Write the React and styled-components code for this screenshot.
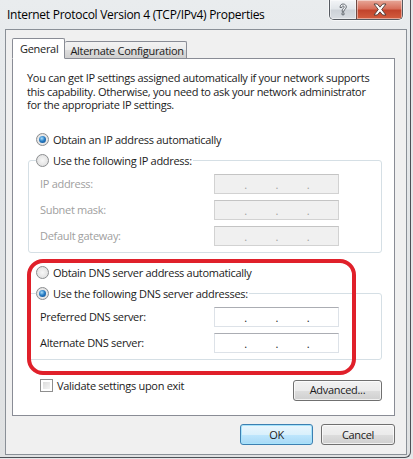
import React from 'react';
import styled, { createGlobalStyle } from 'styled-components';

const GlobalStyle = createGlobalStyle`
    html, body {
        margin: 0;
        padding: 0;
        background: #e4e6e8;
    }
    body {
        font-family: "Segoe UI", "Open Sans", "Noto Sans", sans-serif;
        font-size: 11px;
        letter-spacing: -0.3px;
        color: #1b1b1b;
    }
    * {
        box-sizing: border-box;
    }
`;

const Window = styled.div`
    width: 411px;
    height: 458px;
    display: flex;
    flex-direction: column;
    background: linear-gradient(180deg, #e9ecee 0%, #e3e6e8 40%, #dfe1e2 100%);
    border-right: 1px solid #4d5156;
    border-bottom: 1px solid #4d5156;
    border-bottom-right-radius: 6px;
`;

const TitleBar = styled.div`
    height: 29px;
    display: flex;
    align-items: flex-start;
    padding-left: 7px;
    padding-right: 7px;
`;

const TitleText = styled.div`
    flex: 1;
    margin-top: 7px;
    font-size: 12px;
    letter-spacing: -0.27px;
    line-height: 16px;
    color: #000;
`;

const CaptionGroup = styled.div`
    display: flex;
    height: 20px;
    border: 1px solid #555a61;
    border-top: none;
    border-radius: 0 0 5px 5px;
    overflow: hidden;
    box-shadow: 0 0 0 1px rgba(255, 255, 255, 0.6);
`;

const CaptionButton = styled.div`
    width: ${({ wide }) => (wide ? 46 : 26)}px;
    display: flex;
    align-items: center;
    justify-content: center;
    background: ${({ close }) => (close
        ? 'linear-gradient(180deg, #e7a899 0%, #d8705c 45%, #c2442c 55%, #d35e3f 100%)'
        : 'linear-gradient(180deg, #f3f5f7 0%, #e2e6ea 45%, #cdd2d8 55%, #d9dde2 100%)')};
    border-left: ${({ close }) => (close ? '1px solid #6d4b45' : 'none')};
    box-shadow: inset 0 0 0 1px rgba(255, 255, 255, 0.45);
`;

const Client = styled.div`
    flex: 1;
    margin: 0 3px 2px 5px;
    background: #f0f0f0;
    border: 1px solid #8a9097;
    padding: 7px 11px 0 6px;
    display: flex;
    flex-direction: column;
`;

const TabStrip = styled.div`
    display: flex;
    align-items: flex-end;
    height: 21px;
    position: relative;
    z-index: 1;
`;

const Tab = styled.div`
    height: ${({ active }) => (active ? 21 : 17)}px;
    padding: ${({ active }) => (active ? '0 6px 0 7px' : '0 2px 0 5px')};
    display: flex;
    align-items: center;
    border: 1px solid #898c95;
    border-bottom: ${({ active }) => (active ? '1px solid #fff' : 'none')};
    border-left: ${({ first }) => (first ? '1px solid #898c95' : 'none')};
    background: ${({ active }) => (active
        ? '#fff'
        : 'linear-gradient(180deg, #f2f2f2 0%, #ebebeb 50%, #dddddd 51%, #cfcfcf 100%)')};
    border-radius: 2px 2px 0 0;
    line-height: 14px;
    padding-top: ${({ active }) => (active ? 0 : 1)}px;
    margin-bottom: ${({ active }) => (active ? -1 : 0)}px;
`;

const Panel = styled.div`
    position: relative;
    height: 358px;
    background: #fff;
    border: 1px solid #898c95;
    display: flex;
    flex-direction: column;
`;

const Description = styled.p`
    margin: 12px 12px 0 14px;
    line-height: 13.5px;
`;

const RadioRow = styled.label`
    display: flex;
    align-items: center;
    height: 16px;
    gap: 4px;
    margin-top: ${({ top }) => top}px;
    margin-left: ${({ indent }) => indent ?? 23}px;
`;

const RadioCircle = styled.span`
    width: 13px;
    height: 13px;
    border-radius: 50%;
    border: 1px solid #8b8d8f;
    background: radial-gradient(circle at 50% 50%, #f7f7f7 0%, #e3e3e3 70%, #d4d4d4 100%);
    display: flex;
    align-items: center;
    justify-content: center;
    flex-shrink: 0;
`;

const RadioDot = styled.span`
    width: 7px;
    height: 7px;
    border-radius: 50%;
    background: radial-gradient(circle at 40% 35%, #a9defa 0%, #2a7fc6 45%, #0b4585 100%);
`;

const Group = styled.fieldset`
    margin: 5px 12px 0 15px;
    padding: 0 0 6px 0;
    border: 1px solid #d5dfe5;
    border-radius: 3px;
    min-width: 0;
`;

const Legend = styled.legend`
    margin-left: 7px;
    padding: 0 1px 0 0;
    line-height: 16px;
`;

const FieldRows = styled.div`
    display: flex;
    flex-direction: column;
    gap: 6px;
    margin-top: 5px;
    padding-left: 11px;
`;

const FieldRow = styled.div`
    display: flex;
    align-items: center;
    height: 20px;
`;

const FieldLabel = styled.span`
    width: 174px;
    color: ${({ disabled }) => (disabled ? '#a0a0a0' : '#1b1b1b')};
`;

const IpBox = styled.div`
    width: 125px;
    height: 20px;
    display: flex;
    align-items: center;
    background: ${({ disabled }) => (disabled ? '#f0f0f0' : '#fff')};
    border: 1px solid ${({ disabled }) => (disabled ? '#d2d2d2' : '#dde2e8')};
    border-top-color: ${({ disabled }) => (disabled ? '#c4c4c4' : '#abadb3')};
`;

const IpSegment = styled.span`
    flex: 1;
`;

const IpDot = styled.span`
    width: 2px;
    text-align: center;
    line-height: 14px;
    margin-top: 3px;
    color: ${({ disabled }) => (disabled ? '#a0a0a0' : '#1b1b1b')};
`;

const FooterRow = styled.div`
    display: flex;
    justify-content: space-between;
    align-items: flex-start;
    margin: 19px 12px 0 27px;
`;

const CheckRow = styled.label`
    display: flex;
    align-items: center;
    gap: 4px;
    height: 13px;
`;

const CheckBox = styled.span`
    width: 13px;
    height: 13px;
    border: 1px solid #8f8f8f;
    background: #fff;
    padding: 2px;
    display: flex;

    &::after {
        content: '';
        flex: 1;
        background: linear-gradient(135deg, #dcdcdc 0%, #f4f4f4 100%);
    }
`;

const Button = styled.button`
    font: inherit;
    letter-spacing: inherit;
    color: #1b1b1b;
    width: ${({ w }) => w}px;
    height: ${({ h }) => h ?? 21}px;
    margin-top: ${({ mt }) => mt ?? 0}px;
    border: 1px solid ${({ primary }) => (primary ? '#3c7fb1' : '#707070')};
    border-radius: 3px;
    background: ${({ primary }) => (primary
        ? 'linear-gradient(180deg, #eaf6fd 0%, #d9f0fc 50%, #bee6fd 51%, #a7d9f5 100%)'
        : 'linear-gradient(180deg, #f2f2f2 0%, #ebebeb 50%, #dddddd 51%, #cfcfcf 100%)')};
    box-shadow: inset 0 0 0 1px ${({ primary }) => (primary ? '#a6e3fb' : 'rgba(255,255,255,0.7)')};
    padding: 0;
    line-height: 14px;
`;

const ButtonBar = styled.div`
    display: flex;
    justify-content: flex-end;
    gap: 8px;
    margin-top: 8px;
`;

const Highlight = styled.div`
    position: absolute;
    left: 14px;
    top: 200px;
    width: 329px;
    height: 116px;
    border: 4px solid #e0202a;
    border-radius: 16px;
    pointer-events: none;
`;

const Radio = ({ checked }) => (
    <RadioCircle>{checked && <RadioDot />}</RadioCircle>
);

const IpInput = ({ disabled }) => (
    <IpBox disabled={disabled}>
        <IpSegment />
        <IpDot disabled={disabled}>.</IpDot>
        <IpSegment />
        <IpDot disabled={disabled}>.</IpDot>
        <IpSegment />
        <IpDot disabled={disabled}>.</IpDot>
        <IpSegment />
    </IpBox>
);

const HelpGlyph = () => (
    <svg width="12" height="14" viewBox="0 0 12 14">
        <path
            d="M3 4.5 C3 2 4.5 1 6 1 C8 1 9.3 2.2 9.3 4 C9.3 5.8 7 6.3 7 8.3 L5 8.3 C5 5.8 7.2 5.3 7.2 4 C7.2 3.3 6.7 2.9 6 2.9 C5.3 2.9 4.9 3.5 4.9 4.5 Z M5 9.8 L7 9.8 L7 11.8 L5 11.8 Z"
            fill="#f4f6f8"
            stroke="#5a6068"
            strokeWidth="0.9"
        />
    </svg>
);

const CloseGlyph = () => (
    <svg width="16" height="13" viewBox="0 0 16 13">
        <path
            d="M2 1 L5.3 1 L8 4.2 L10.7 1 L14 1 L9.7 6.5 L14 12 L10.7 12 L8 8.8 L5.3 12 L2 12 L6.3 6.5 Z"
            fill="#fff"
            stroke="#4b3a37"
            strokeWidth="0.9"
            strokeLinejoin="round"
        />
    </svg>
);

const ipFields = ['IP address:', 'Subnet mask:', 'Default gateway:'];
const dnsFields = ['Preferred DNS server:', 'Alternate DNS server:'];

const App = () => (
    <>
        <GlobalStyle />
        <Window>
            <TitleBar>
                <TitleText>Internet Protocol Version 4 (TCP/IPv4) Properties</TitleText>
                <CaptionGroup>
                    <CaptionButton><HelpGlyph /></CaptionButton>
                    <CaptionButton wide close><CloseGlyph /></CaptionButton>
                </CaptionGroup>
            </TitleBar>
            <Client>
                <TabStrip>
                    <Tab active first>General</Tab>
                    <Tab>Alternate Configuration</Tab>
                </TabStrip>
                <Panel>
                    <Description>
                        You can get IP settings assigned automatically if your network supports
                        this capability. Otherwise, you need to ask your network administrator
                        for the appropriate IP settings.
                    </Description>
                    <RadioRow top={20}>
                        <Radio checked />
                        Obtain an IP address automatically
                    </RadioRow>
                    <Group>
                        <Legend>
                            <RadioRow top={0} indent={0}>
                                <Radio />
                                Use the following IP address:
                            </RadioRow>
                        </Legend>
                        <FieldRows>
                            {ipFields.map((label) => (
                                <FieldRow key={label}>
                                    <FieldLabel disabled>{label}</FieldLabel>
                                    <IpInput disabled />
                                </FieldRow>
                            ))}
                        </FieldRows>
                    </Group>
                    <RadioRow top={12}>
                        <Radio />
                        Obtain DNS server address automatically
                    </RadioRow>
                    <Group>
                        <Legend>
                            <RadioRow top={0} indent={0}>
                                <Radio checked />
                                Use the following DNS server addresses:
                            </RadioRow>
                        </Legend>
                        <FieldRows>
                            {dnsFields.map((label) => (
                                <FieldRow key={label}>
                                    <FieldLabel>{label}</FieldLabel>
                                    <IpInput />
                                </FieldRow>
                            ))}
                        </FieldRows>
                    </Group>
                    <FooterRow>
                        <CheckRow>
                            <CheckBox />
                            Validate settings upon exit
                        </CheckRow>
                        <Button w={89} h={21} mt={1}>Advanced...</Button>
                    </FooterRow>
                    <Highlight />
                </Panel>
                <ButtonBar>
                    <Button primary w={73}>OK</Button>
                    <Button w={74}>Cancel</Button>
                </ButtonBar>
            </Client>
        </Window>
    </>
);

export default App;
